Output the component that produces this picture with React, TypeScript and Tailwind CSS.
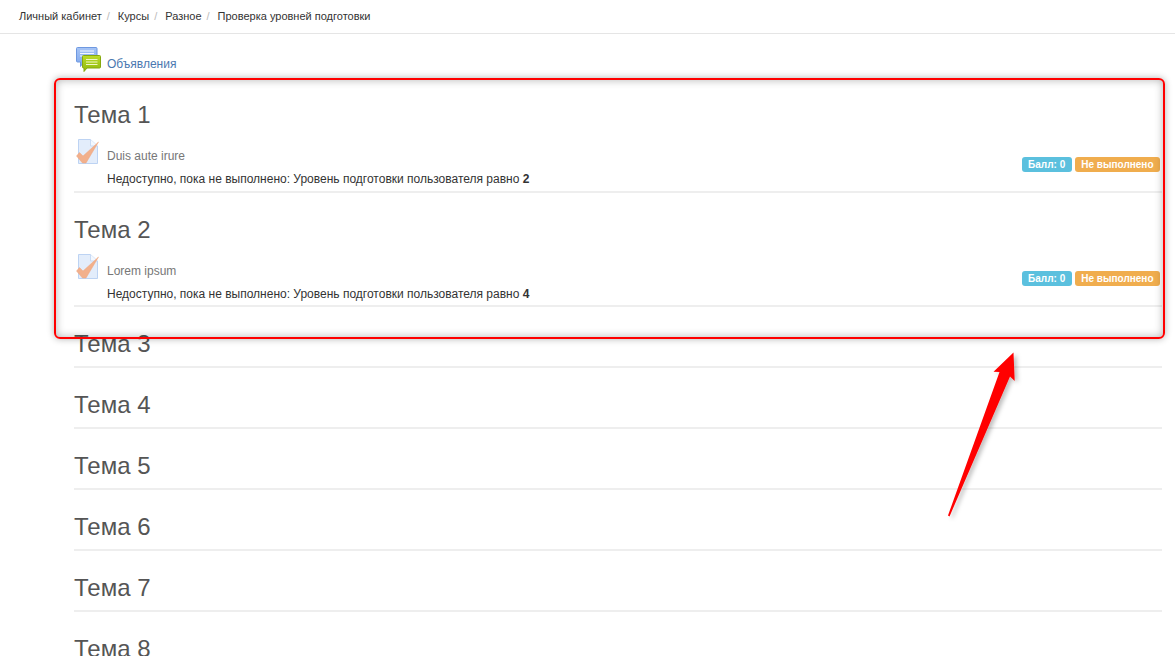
const font = { fontFamily: '"Liberation Sans", Arial, sans-serif' };

function ForumIcon() {
  return (
    <svg width="25" height="25" viewBox="0 0 25 25" className="shrink-0">
      <defs>
        <linearGradient id="fb" x1="0" y1="0" x2="0" y2="1">
          <stop offset="0" stopColor="#a6c4f6" />
          <stop offset="1" stopColor="#7fa8ec" />
        </linearGradient>
        <linearGradient id="fg" x1="0" y1="0" x2="0" y2="1">
          <stop offset="0" stopColor="#bcdc2a" />
          <stop offset="1" stopColor="#8fb80c" />
        </linearGradient>
      </defs>
      <path d="M1.500 0.500H20a1 1 0 0 1 1 1V15H7.500l-3 4.500V15H1.500a1 1 0 0 1-1-1V1.500a1 1 0 0 1 1-1z" fill="url(#fb)" stroke="#6e98e0" />
      <path d="M4 4H18M4 6.500H18M4 9H13" stroke="#f2f6ff" strokeWidth="1" />
      <path d="M7.500 8.500H23.500a1 1 0 0 1 1 1V20a1 1 0 0 1-1 1H11L8 24.500V21H7.500a1 1 0 0 1-1-1V9.500a1 1 0 0 1 1-1z" fill="url(#fg)" stroke="#86a80e" />
      <path d="M10 12.500H21.500M10 15H21.500M10 17.500H21.500" stroke="#f0f8c8" strokeWidth="1" />
    </svg>
  );
}

function QuizIcon() {
  return (
    <svg width="23" height="25" viewBox="0 0 23 25" className="shrink-0">
      <path d="M2.500 0.500H14.500L21.500 7V24.500H2.500z" fill="#e3edfb" stroke="#bdd3f3" />
      <path d="M14.500 0.500V7H21.500" fill="#f4f8fe" stroke="#c9dbf5" />
      <path d="M0.500 17L3.500 13.500L7 17L22.500 3L10 24H6.500z" fill="#f2b08c" stroke="#efa67e" strokeWidth="0.5" />
    </svg>
  );
}

function Crumb({ children, last }: { children: string; last?: boolean }) {
  return (
    <>
      <span>{children}</span>
      {!last && <span className="text-[#bbbbbb] pl-[5px] pr-[8px]">/</span>}
    </>
  );
}

function Section({ n, children }: { n: number; children?: React.ReactNode }) {
  return (
    <div className="border-b-2 border-[#eeeeee]">
      <h3 className={`pt-[24px] text-[24px] leading-[26px] text-[#555555] ${children ? "pb-[1px]" : "pb-[9px]"}`}>Тема {n}</h3>
      {children}
    </div>
  );
}

function Activity({ name, level, bottom, badgeBottom }: { name: string; level: number; bottom: string; badgeBottom: string }) {
  return (
    <div className={`flex items-end justify-between pr-[2px] mt-[10px] ${bottom}`}>
      <div>
        <div className="flex items-end pl-[2px]">
          <QuizIcon />
          <span className="text-[12px] leading-[15px] text-[#777777] ml-[8px]">{name}</span>
        </div>
        <div className="text-[12px] leading-[17px] text-[#333333] pl-[33px] mt-[7px]">
          Недоступно, пока не выполнено: Уровень подготовки пользователя равно <b>{level}</b>
        </div>
      </div>
      <div className={`flex gap-[3px] ${badgeBottom}`}>
        <span className="rounded-[3px] bg-[#5bc0de] px-[6.5px] text-[10px] leading-[15px] font-bold text-white">Балл: 0</span>
        <span className="rounded-[3px] bg-[#f0ad4e] px-[6.5px] text-[10px] leading-[15px] font-bold text-white">Не выполнено</span>
      </div>
    </div>
  );
}

export default function App() {
  return (
    <div className="relative h-[656px] w-[1175px] overflow-hidden bg-white" style={font}>
      <div className="flex h-[34px] items-center border-b border-[#e5e5e5] pl-[19px] text-[11px] text-[#333333]">
        <Crumb>Личный кабинет</Crumb>
        <Crumb>Курсы</Crumb>
        <Crumb>Разное</Crumb>
        <Crumb last>Проверка уровней подготовки</Crumb>
      </div>
      <div className="pl-[74px] pr-[13px]">
        <div className="flex h-[44px] items-start pl-[2px] pt-[13px]">
          <ForumIcon />
          <span className="ml-[6px] mt-[10px] text-[12px] leading-[15px] text-[#4a78b0]">Объявления</span>
        </div>
        <Section n={1}><Activity name="Duis aute irure" level={2} bottom="pb-[3px]" badgeBottom="mb-[16px]" /></Section>
        <Section n={2}><Activity name="Lorem ipsum" level={4} bottom="pb-[2px]" badgeBottom="mb-[17px]" /></Section>
        <Section n={3} />
        <Section n={4} />
        <Section n={5} />
        <Section n={6} />
        <Section n={7} />
        <Section n={8} />
      </div>
      <div className="pointer-events-none absolute left-[54px] top-[78px] h-[261px] w-[1111px] rounded-[6px] border-2 border-[#ff0000] shadow-[0_0_7px_rgba(0,0,0,0.3),inset_0_0_8px_rgba(0,0,0,0.3)]" />
      <svg className="pointer-events-none absolute left-[930px] top-[340px]" width="100" height="190" viewBox="930 340 100 190">
        <defs>
          <filter id="s" x="-30%" y="-10%" width="170%" height="130%">
            <feDropShadow dx="3" dy="2" stdDeviation="2" floodColor="#000" floodOpacity="0.25" />
          </filter>
        </defs>
        <path d="M1013.500 352.500L993.500 371.700L999.500 372L948 515.500L949.500 516.500L1010 376.500L1014.700 381z" fill="#ff0000" filter="url(#s)" />
      </svg>
    </div>
  );
}
